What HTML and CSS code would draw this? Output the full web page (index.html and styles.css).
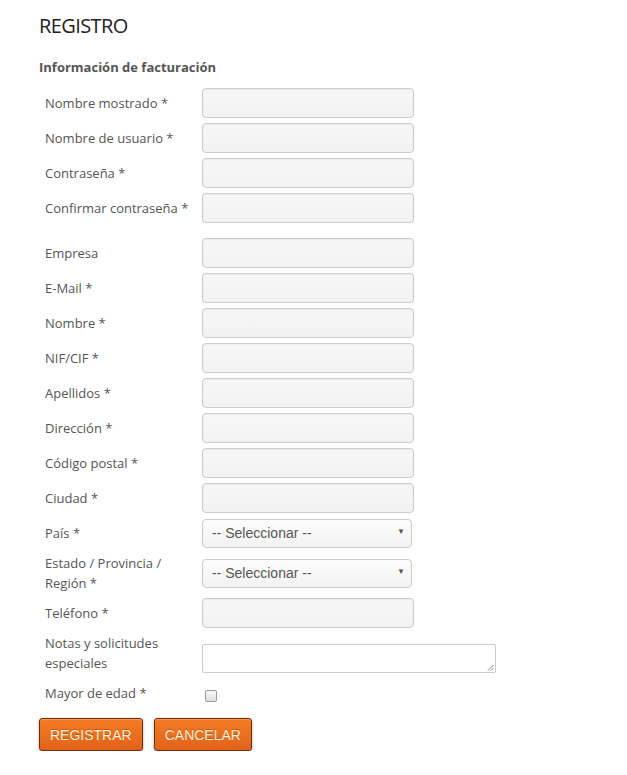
FILE: index.html
```html
<!DOCTYPE html>
<html lang="es">
<head>
<meta charset="utf-8">
<title>Registro</title>
<link rel="stylesheet" href="styles.css">
</head>
<body>
<div class="page">
  <h1 class="title">REGISTRO</h1>
  <h2 class="subtitle">Información de facturación</h2>
  <form class="form">
    <div class="group group-account">
      <div class="row"><label class="label">Nombre mostrado *</label><input class="field" type="text"></div>
      <div class="row"><label class="label">Nombre de usuario *</label><input class="field" type="text"></div>
      <div class="row"><label class="label">Contraseña *</label><input class="field" type="password"></div>
      <div class="row"><label class="label">Confirmar contraseña *</label><input class="field" type="password"></div>
    </div>
    <div class="group">
      <div class="row"><label class="label">Empresa</label><input class="field" type="text"></div>
      <div class="row"><label class="label">E-Mail *</label><input class="field" type="text"></div>
      <div class="row"><label class="label">Nombre *</label><input class="field" type="text"></div>
      <div class="row"><label class="label">NIF/CIF *</label><input class="field" type="text"></div>
      <div class="row"><label class="label">Apellidos *</label><input class="field" type="text"></div>
      <div class="row"><label class="label">Dirección *</label><input class="field" type="text"></div>
      <div class="row"><label class="label">Código postal *</label><input class="field" type="text"></div>
      <div class="row"><label class="label">Ciudad *</label><input class="field" type="text"></div>
      <div class="row"><label class="label">País *</label>
        <div class="select"><span>-- Seleccionar --</span><span class="caret">▼</span></div>
      </div>
      <div class="row"><label class="label">Estado / Provincia /<br>Región *</label>
        <div class="select"><span>-- Seleccionar --</span><span class="caret">▼</span></div>
      </div>
      <div class="row"><label class="label">Teléfono *</label><input class="field" type="text"></div>
      <div class="row"><label class="label">Notas y solicitudes<br>especiales</label>
        <div class="textarea"><svg class="grip" width="7" height="7" viewBox="0 0 7 7"><path d="M6.5 1 L1 6.5 M6.5 4 L4 6.5" stroke="#888" stroke-width="1"/></svg></div>
      </div>
      <div class="row"><label class="label">Mayor de edad *</label><span class="check"></span></div>
    </div>
    <div class="actions">
      <button type="button" class="btn">REGISTRAR</button>
      <button type="button" class="btn">CANCELAR</button>
    </div>
  </form>
</div>
</body>
</html>
```
FILE: styles.css
```css
html, body {
  margin: 0;
  padding: 0;
  background: #fff;
}
.page {
  padding: 13px 0 0 39px;
  font-family: "Open Sans", "DejaVu Sans", sans-serif;
  color: #555;
}
.title {
  margin: 0;
  font-size: 20px;
  font-weight: 400;
  line-height: 26px;
  color: #222;
  letter-spacing: -0.6px;
}
.subtitle {
  margin: 19px 0 0 0;
  font-size: 13px;
  font-weight: 700;
  line-height: 18px;
  color: #555;
}
.form {
  margin-top: 12px;
  display: flex;
  flex-direction: column;
  gap: 10px;
}
.group {
  display: flex;
  flex-direction: column;
  gap: 5px;
}
.group-account {
  margin-bottom: 5px;
}
.row {
  display: grid;
  grid-template-columns: 163px auto;
  align-items: center;
  min-height: 30px;
}
.label {
  padding-left: 6px;
  font-size: 13px;
  line-height: 20px;
  letter-spacing: 0;
  color: #555;
}
.field {
  box-sizing: border-box;
  width: 212px;
  height: 30px;
  margin: 0;
  border: 1px solid #ccc;
  border-radius: 4px;
  background: linear-gradient(#f7f7f7, #f2f2f2);
  box-shadow: inset 0 1px 2px rgba(0,0,0,0.05);
}
.select {
  box-sizing: border-box;
  width: 210px;
  height: 29px;
  display: flex;
  align-items: center;
  justify-content: space-between;
  padding: 0 6px 0 9px;
  border: 1px solid #ccc;
  border-radius: 4px;
  background: linear-gradient(#fdfdfd, #f2f2f2);
  font-family: "Liberation Sans", Arial, sans-serif;
  font-size: 14px;
  color: #555;
}
.caret {
  font-size: 8px;
  color: #555;
  margin-top: -3px;
}
.textarea {
  position: relative;
  box-sizing: border-box;
  width: 294px;
  height: 29px;
  align-self: end;
  border: 1px solid #ccc;
  border-radius: 2px;
  background: #fff;
}
.grip {
  position: absolute;
  right: 1px;
  bottom: 1px;
}
.check {
  box-sizing: border-box;
  width: 12px;
  height: 12px;
  margin: 6px 0 0 3px;
  border: 1px solid #999;
  border-radius: 2px;
  background: linear-gradient(#fafafa, #dcdcdc);
}
.actions {
  display: flex;
  gap: 11px;
}
.btn {
  box-sizing: border-box;
  height: 33px;
  padding: 0 10px;
  border: 1px solid #6e2e0c;
  border-radius: 3px;
  background: linear-gradient(#f57c25, #e0621a);
  color: #fff0d8;
  font-family: "Liberation Sans", Arial, sans-serif;
  font-size: 14px;
  text-shadow: 0 -1px 0 rgba(120,50,10,0.4);
  box-shadow: 0 1px 3px rgba(0,0,0,0.35), inset 0 1px 0 rgba(255,200,150,0.4);
}
```
